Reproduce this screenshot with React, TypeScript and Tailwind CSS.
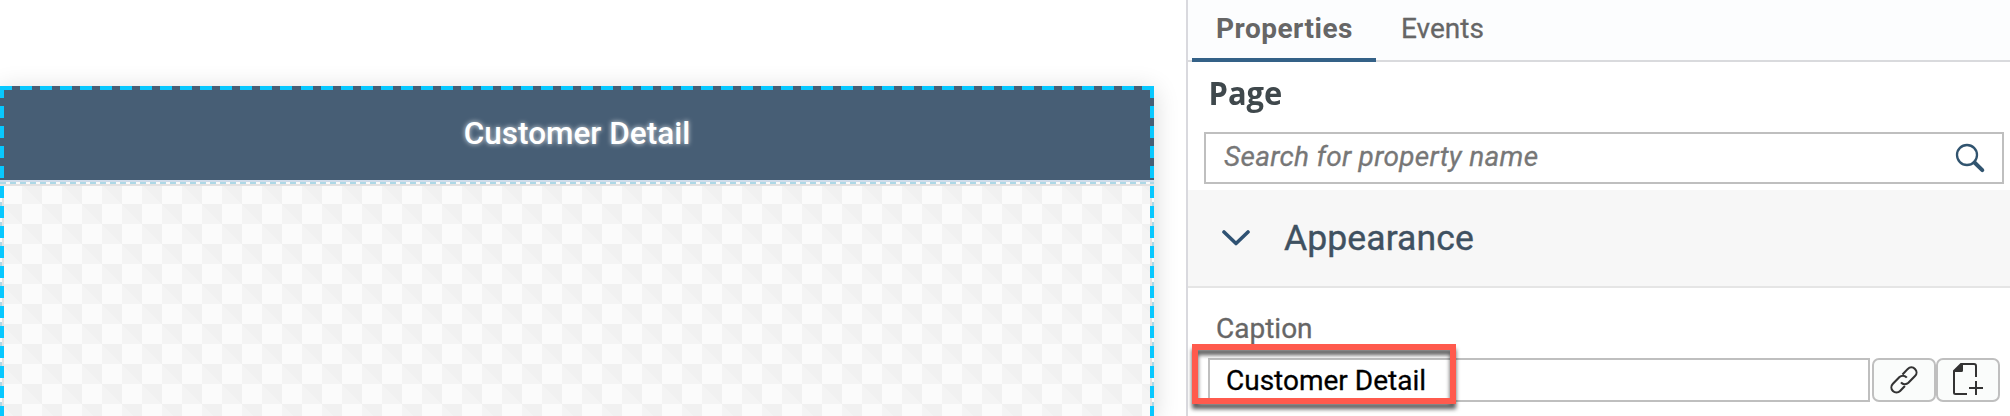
import type { ReactNode } from 'react';

function DesignCanvas() {
  return (
    <section className="w-[1154px] shrink-0 pt-[86px]">
      <div className="relative flex h-[330px] flex-col shadow-[0_4px_24px_rgba(0,0,0,0.16)]">
        <header className="flex h-[94px] shrink-0 items-center justify-center bg-[#475e75]">
          <h1 className="text-[31.5px] leading-[95px] font-medium text-white [text-shadow:0_0_5px_rgba(255,255,255,0.8)]">
            Customer Detail
          </h1>
        </header>
        <div className="h-[2px] shrink-0 bg-[#cfdcea]" />
        <div className="h-[2px] shrink-0 bg-[repeating-linear-gradient(90deg,#add8e6_0_6px,#fafafa_6px_10px)]" />
        <div className="h-[2px] shrink-0 bg-[#e3e3e3]" />
        <div className="flex grow">
          <div className="w-[2px] bg-[repeating-linear-gradient(180deg,#add8e6_0_2px,#fafafa_2px_6px,#add8e6_6px_10px)]" />
          <div className="grow border-x-2 border-[#e3e3e3] bg-[conic-gradient(transparent_25%,#fbfbfb_0_50%,transparent_0_75%,#fbfbfb_0),linear-gradient(45deg,#f4f4f4_25%,#f1f1f1_25%_50%,#f4f4f4_50%_75%,#f1f1f1_75%)] bg-[size:40px_40px] bg-[position:-2px_-2px]" />
          <div className="w-[2px] bg-[repeating-linear-gradient(180deg,#add8e6_0_2px,#fafafa_2px_6px,#add8e6_6px_10px)]" />
        </div>
        {/* selection outline */}
        <div className="absolute inset-x-0 top-0 h-[4px] bg-[repeating-linear-gradient(90deg,#08c8ff_0_12px,transparent_12px_20.035px)]" />
        <div className="absolute inset-y-0 left-0 w-[4px] bg-[repeating-linear-gradient(180deg,#08c8ff_0_12px,transparent_12px_20px)]" />
        <div className="absolute inset-y-0 right-0 w-[4px] bg-[repeating-linear-gradient(180deg,#08c8ff_0_12px,transparent_12px_20px)]" />
      </div>
    </section>
  );
}

function IconButton({ label, children }: { label: string; children: ReactNode }) {
  return (
    <button
      aria-label={label}
      className="flex h-[44px] w-[64px] shrink-0 items-center justify-center rounded-[7px] border-2 border-[#bfbfbf] bg-[#fafcfb]"
    >
      {children}
    </button>
  );
}

function PropertiesPanel() {
  return (
    <aside className="flex h-[416px] grow flex-col border-l-2 border-[#d9d9de] bg-white">
      <nav className="flex h-[62px] shrink-0 items-start border-b-2 border-[#d9dadd] bg-[#fcfdfe] pl-[4px] text-[28px] leading-[58px] text-[#666666]">
        <div className="h-[62px] w-[184px] border-b-4 border-[#346187] pl-[24px] font-bold tracking-[0.5px]">
          Properties
        </div>
        <div className="pl-[25px] [-webkit-text-stroke:0.3px]">Events</div>
      </nav>
      <h2 className="h-[70px] shrink-0 origin-left scale-x-[0.98] pl-[21px] font-['Open_Sans',sans-serif] text-[31.5px] leading-[61px] font-bold text-[#3f484c]">
        Page
      </h2>
      <div className="mr-[6px] ml-[16px] flex h-[52px] shrink-0 justify-between border-2 border-[#bfbfbf] pr-[16px] pl-[18px]">
        <span className="text-[28px] leading-[46px] tracking-[0.3px] text-[#777777] italic [-webkit-text-stroke:0.3px]">
          Search for property name
        </span>
        <svg className="mt-[8px] h-[32px] w-[32px]" viewBox="0 0 32 32" fill="none" stroke="#31546f">
          <circle cx="13" cy="13" r="10" strokeWidth="2.3" />
          <path d="M20.5 20.5 28.3 28.2" strokeWidth="4" strokeLinecap="round" />
        </svg>
      </div>
      <div className="mt-[6px] flex h-[98px] shrink-0 items-center border-b-2 border-[#e5e5e5] bg-[#f7f7f7] pl-[34px]">
        <svg className="h-[18px] w-[28px]" viewBox="0 0 28 18" fill="none" stroke="#2f5273">
          <path d="M2 3 14 14.5 26 3" strokeWidth="3.6" strokeLinecap="round" strokeLinejoin="round" />
        </svg>
        <span className="ml-[34px] text-[35.5px] leading-[96px] tracking-[0.1px] text-[#3f5161] [-webkit-text-stroke:0.4px]">
          Appearance
        </span>
      </div>
      <label className="block h-[70px] shrink-0 pt-[12px] pl-[28px] text-[28px] leading-[58px] text-[#666666] [-webkit-text-stroke:0.3px]">
        Caption
      </label>
      <div className="relative flex shrink-0 pl-[20px]">
        <div className="mr-[2px] h-[44px] w-[662px] border-2 border-[#bfbfbf] pl-[16px] text-[28px] leading-[42px] text-black [-webkit-text-stroke:0.3px]">
          Customer Detail
        </div>
        <IconButton label="Bind">
          <svg className="h-[30px] w-[30px]" viewBox="0 0 30 30" fill="none" stroke="#333333" strokeWidth="2.1">
            <path d="M13.5 9.5 18.8 3.9a5 5 0 0 1 7.2 7.2l-6.6 6.7a5 5 0 0 1-7.4-.5" />
            <path d="M17.8 12.6a5 5 0 0 0-7.3-.5l-6.6 6.7a5 5 0 0 0 7.2 7.2l4.8-5" />
          </svg>
        </IconButton>
        <IconButton label="Add translation">
          <svg className="mr-[2px] mb-[3px] h-[34px] w-[32px]" viewBox="0 0 32 34" fill="none" stroke="#333333" strokeWidth="2">
            <path d="M16 32H4.5Q3 32 3 30.5V9L10 2H23Q25 2 25 4V15" />
            <path d="M2.5 9.5 10 2H12V8.5Q12 10 10.5 10H3Z" fill="#333333" stroke="none" />
            <path d="M25 19V33M18 26H32" />
          </svg>
        </IconButton>
        <div className="absolute top-[-14px] left-[4px] h-[60px] w-[264px] border-[6px] border-[#ff5a4d] drop-shadow-[0_5px_2px_rgba(0,0,0,0.65)]" />
      </div>
    </aside>
  );
}

export default function App() {
  return (
    <main className="flex h-[416px] w-[2010px] overflow-hidden bg-white font-[Roboto,sans-serif]">
      <DesignCanvas />
      <div className="w-[32px] shrink-0" />
      <PropertiesPanel />
    </main>
  );
}
